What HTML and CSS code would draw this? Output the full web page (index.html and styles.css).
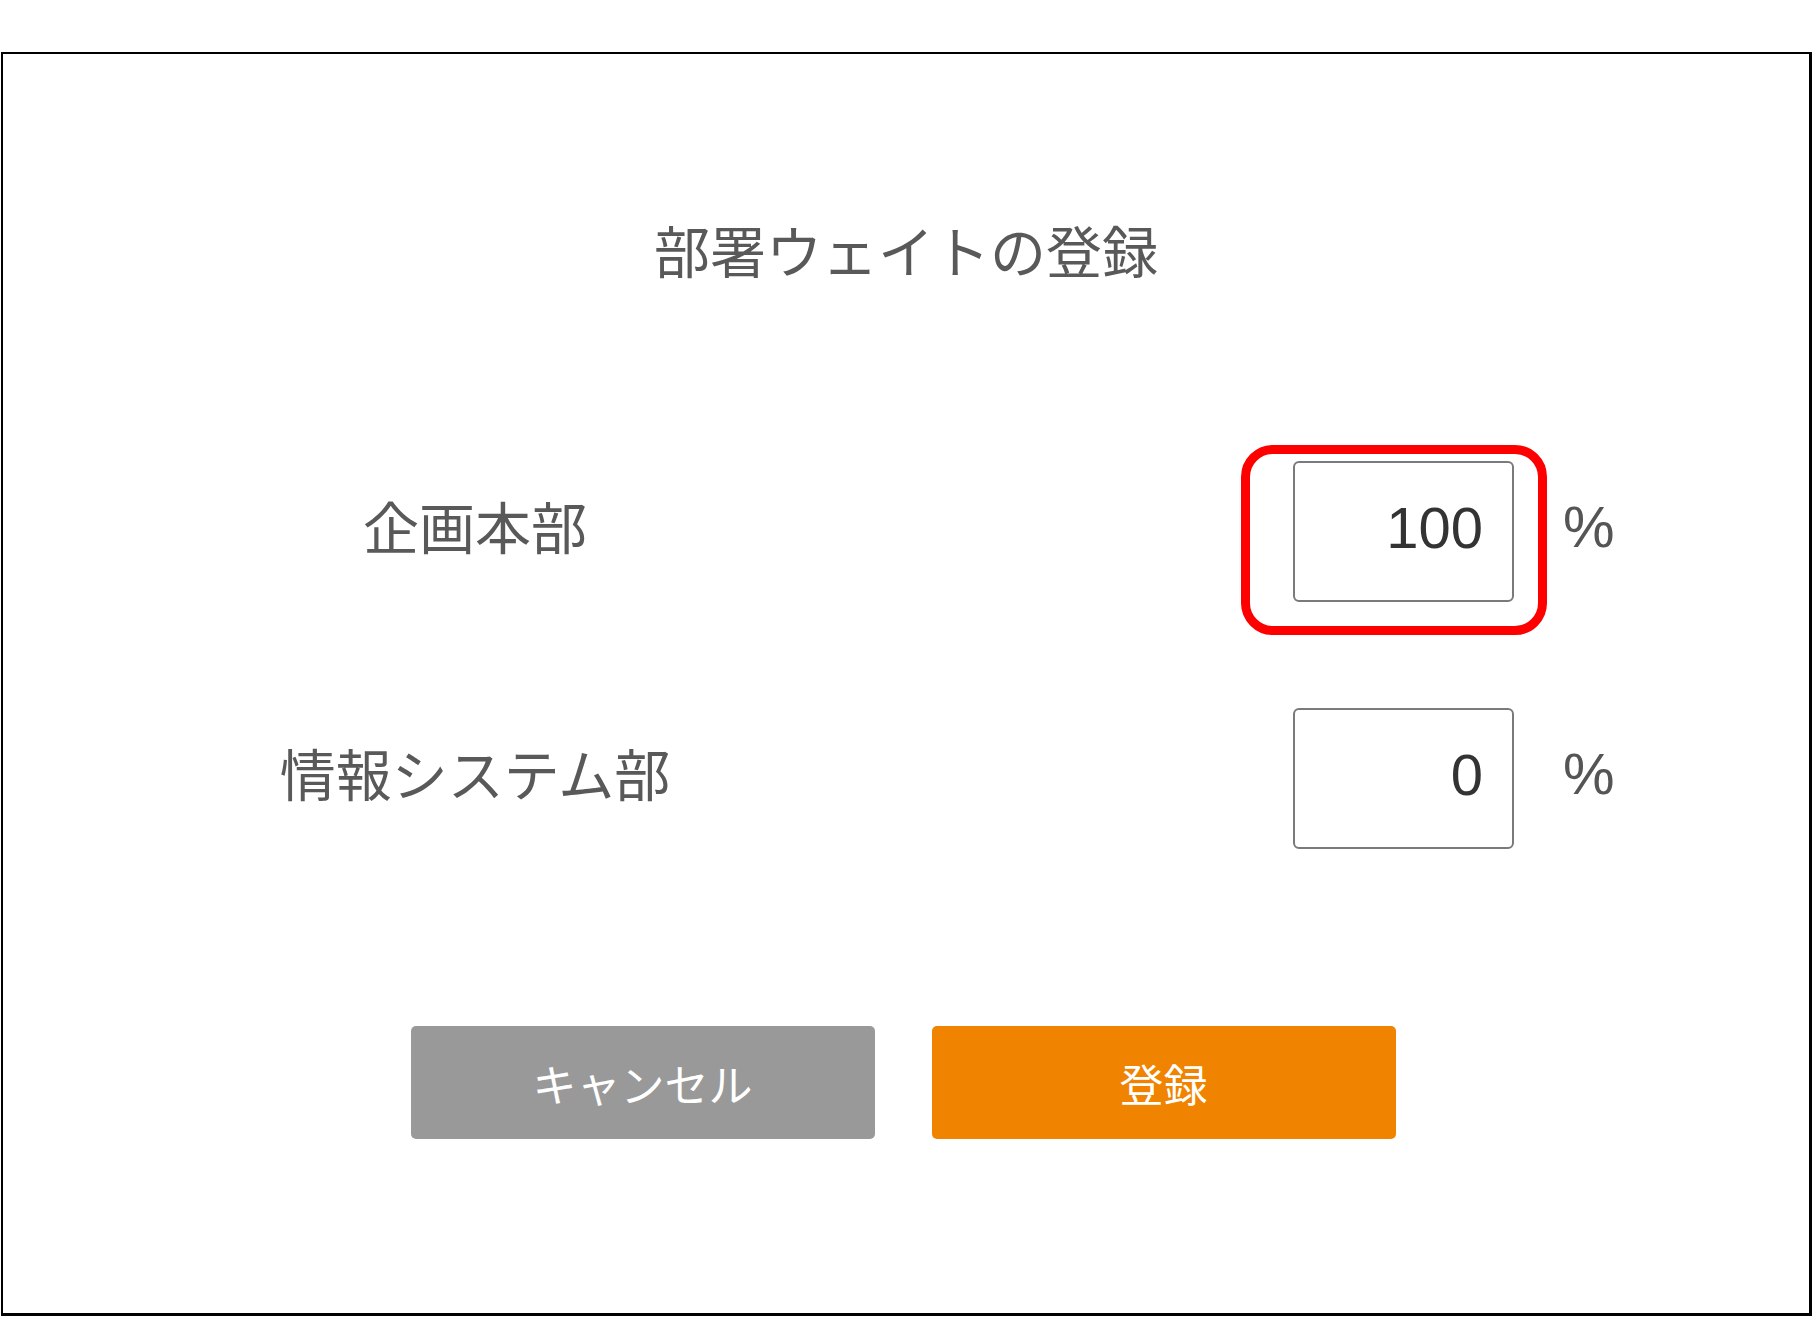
FILE: index.html
```html
<!DOCTYPE html>
<html lang="ja">
<head>
<meta charset="utf-8">
<title>部署ウェイトの登録</title>
<link rel="stylesheet" href="styles.css">
</head>
<body>
<div class="dialog">
  <h1 class="title">部署ウェイトの登録</h1>
  <div class="form">
    <div class="row">
      <div class="label">企画本部</div>
      <div class="field highlighted">
        <input class="num" type="text" value="100">
        <span class="mark"></span>
      </div>
      <div class="unit">%</div>
    </div>
    <div class="row">
      <div class="label">情報システム部</div>
      <div class="field">
        <input class="num" type="text" value="0">
      </div>
      <div class="unit">%</div>
    </div>
  </div>
  <div class="actions">
    <button class="btn btn-cancel" type="button">キャンセル</button>
    <button class="btn btn-submit" type="button">登録</button>
  </div>
</div>
</body>
</html>
```

FILE: styles.css
```css
html, body {
  margin: 0;
  padding: 0;
  background: #ffffff;
}

body {
  font-family: "Noto Sans CJK JP", "Noto Sans", sans-serif;
  color: #595959;
}

.dialog {
  box-sizing: border-box;
  margin: 52px 0 0 1px;
  width: 1811px;
  height: 1264px;
  border: 2px solid #000000;
  border-bottom-width: 3px;
  border-right-width: 3px;
  display: flex;
  flex-direction: column;
}

.title {
  margin: 167px 0 0 0;
  font-size: 56px;
  font-weight: 400;
  line-height: 1;
  text-align: center;
  color: #595959;
}

.form {
  margin-top: 184px;
  padding-left: 97px;
  display: flex;
  flex-direction: column;
  gap: 106px;
}

.row {
  display: flex;
  align-items: center;
  height: 141px;
}

.label {
  width: 750px;
  text-align: center;
  font-size: 56px;
  line-height: 1;
  color: #595959;
  margin-top: -13px;
}

.field {
  position: relative;
  margin-left: 443px;
  width: 221px;
  height: 141px;
}

.num {
  box-sizing: border-box;
  width: 221px;
  height: 141px;
  margin: 0;
  padding: 0 29px 8px 0;
  border: 2px solid #7a7a7a;
  border-radius: 6px;
  background: #ffffff;
  font-family: "Liberation Sans", Arial, sans-serif;
  font-size: 58px;
  color: #333333;
  text-align: right;
  outline: none;
}

.mark {
  position: absolute;
  left: -52px;
  top: -16px;
  width: 306px;
  height: 190px;
  box-sizing: border-box;
  border: 9px solid #ff0000;
  border-radius: 32px;
  pointer-events: none;
}

.unit {
  margin-left: 49px;
  font-family: "Liberation Sans", Arial, sans-serif;
  font-size: 58px;
  line-height: 1;
  color: #555555;
  margin-top: -9px;
}

.actions {
  margin-top: 177px;
  display: flex;
  justify-content: center;
  gap: 57px;
  padding-right: 6px;
}

.btn {
  width: 464px;
  height: 113px;
  border: none;
  border-radius: 5px;
  font-family: "Noto Sans CJK JP", "Noto Sans", sans-serif;
  font-size: 44px;
  color: #ffffff;
  padding: 0;
  cursor: pointer;
}

.btn-cancel {
  background: #999999;
}

.btn-submit {
  background: #f08300;
}
```
